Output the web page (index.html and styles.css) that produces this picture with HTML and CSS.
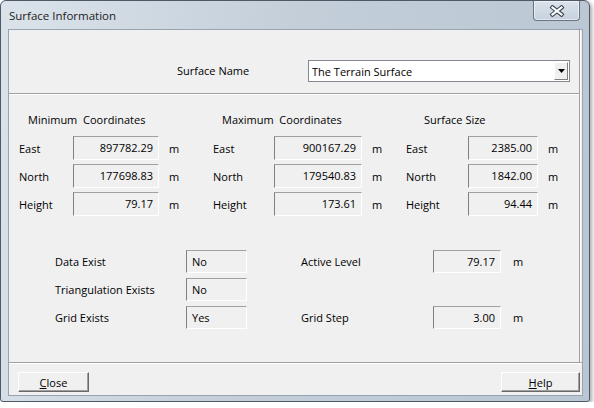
FILE: index.html
```html
<!DOCTYPE html>
<html>
<head>
<meta charset="utf-8">
<link rel="stylesheet" href="styles.css">
</head>
<body>
<div class="window">
  <div class="titlebar">
    <span class="title">Surface Information</span>
    <div class="xbtn">
      <svg width="16" height="12" viewBox="0 0 16 12">
        <path d="M3.5 2.5 L12.5 9.5 M12.5 2.5 L3.5 9.5" stroke="#3c4450" stroke-width="4.2" stroke-linecap="square"/>
        <path d="M3.5 2.5 L12.5 9.5 M12.5 2.5 L3.5 9.5" stroke="#ffffff" stroke-width="2.2" stroke-linecap="square"/>
      </svg>
    </div>
  </div>
  <div class="client">
    <div class="panel">
      <div class="top">
        <span class="name-label">Surface Name</span>
        <div class="combo">
          <span class="combo-text">The Terrain Surface</span>
          <span class="combo-btn"><svg width="7" height="4" viewBox="0 0 7 4"><path d="M0 0 H7 L3.5 4 Z" fill="#000"/></svg></span>
        </div>
      </div>
      <div class="middle">
        <div class="coords">
          <div class="col col-min">
            <div class="head">Minimum&nbsp; Coordinates</div>
            <span class="lbl">East</span><span class="box num">897782.29</span><span class="unit">m</span>
            <span class="lbl">North</span><span class="box num">177698.83</span><span class="unit">m</span>
            <span class="lbl">Height</span><span class="box num">79.17</span><span class="unit">m</span>
          </div>
          <div class="col col-max">
            <div class="head">Maximum&nbsp; Coordinates</div>
            <span class="lbl">East</span><span class="box num">900167.29</span><span class="unit">m</span>
            <span class="lbl">North</span><span class="box num">179540.83</span><span class="unit">m</span>
            <span class="lbl">Height</span><span class="box num">173.61</span><span class="unit">m</span>
          </div>
          <div class="col col-size">
            <div class="head">Surface Size</div>
            <span class="lbl">East</span><span class="box num">2385.00</span><span class="unit">m</span>
            <span class="lbl">North</span><span class="box num">1842.00</span><span class="unit">m</span>
            <span class="lbl">Height</span><span class="box num">94.44</span><span class="unit">m</span>
          </div>
        </div>
        <div class="lower">
          <div class="flags">
            <span class="lbl">Data Exist</span><span class="box txt">No</span>
            <span class="lbl">Triangulation Exists</span><span class="box txt">No</span>
            <span class="lbl">Grid Exists</span><span class="box txt">Yes</span>
          </div>
          <div class="levels">
            <span class="lbl r1">Active Level</span><span class="box num r1">79.17</span><span class="unit r1">m</span>
            <span class="lbl r3">Grid Step</span><span class="box num r3">3.00</span><span class="unit r3">m</span>
          </div>
        </div>
      </div>
    </div>
    <div class="footer">
      <button class="btn btn-close"><u>C</u>lose</button>
      <button class="btn btn-help"><u>H</u>elp</button>
    </div>
  </div>
</div>
</body>
</html>
```

FILE: styles.css
```css
html, body {
  margin: 0;
  padding: 0;
  background: #ffffff;
}
body {
  font-family: "Open Sans", "Noto Sans", sans-serif;
  font-size: 11px;
  color: #000;
}
.window {
  box-sizing: content-box;
  width: 575px;
  height: 395px;
  border: 1px solid #4f5966;
  border-radius: 6px 6px 3px 3px;
  background: linear-gradient(100deg, #dbe3ea 0px, #c3ced9 300px, #b9c6d3 100%);
  box-shadow: 2px 2px 4px rgba(0,0,0,0.35);
  display: flex;
  flex-direction: column;
  padding: 0 6px 5px 7px;
  margin: 0;
}
.titlebar {
  flex: 0 0 28px;
  height: 28px;
  display: flex;
  align-items: flex-start;
  justify-content: space-between;
  margin-left: -7px;
}
.title {
  font-size: 11.5px;
  color: #1b1b1b;
  padding: 7px 0 0 8px;
  line-height: 16px;
}
.xbtn {
  width: 45px;
  height: 19px;
  border: 1px solid #6a7584;
  border-top: none;
  border-radius: 0 0 4px 4px;
  background: linear-gradient(180deg, #dbe3eb, #c6d1dd);
  display: flex;
  align-items: center;
  justify-content: center;
  margin-right: 3px;
  box-shadow: inset 0 0 0 1px rgba(255,255,255,0.5);
}
.client {
  flex: 1 1 auto;
  background: #f0f0f0;
  border: 1px solid #98a4b1;
  display: flex;
  flex-direction: column;
}
.panel {
  flex: 0 0 auto;
  width: 570px;
  height: 332px;
  border-right: 1px solid #a0a0a0;
  box-shadow: 1px 0 0 #fff;
  display: flex;
  flex-direction: column;
}
.top {
  flex: 0 0 64px;
  height: 64px;
  border-bottom: 1px solid #a0a0a0;
  box-shadow: 0 1px 0 #ffffff;
  display: flex;
  align-items: flex-start;
  padding-top: 30px;
  box-sizing: border-box;
}
.name-label {
  margin-left: 168px;
  width: 131px;
  line-height: 22px;
}
.combo {
  width: 260px;
  height: 20px;
  border: 1px solid #828790;
  background: #fff;
  display: flex;
  align-items: center;
  justify-content: space-between;
}
.combo-text {
  padding-left: 3px;
  font-size: 11px;
}
.combo-btn {
  width: 14px;
  height: 18px;
  margin-right: 1px;
  background: #f0f0f0;
  border-top: 1px solid #fff;
  border-left: 1px solid #fff;
  border-right: 1px solid #808080;
  border-bottom: 1px solid #808080;
  box-sizing: border-box;
  display: flex;
  align-items: center;
  justify-content: center;
}
.middle {
  flex: 1;
  padding-top: 17px;
  margin-top: 1px;
}
.coords {
  display: flex;
  align-items: flex-start;
}
.col {
  display: grid;
  grid-auto-rows: 24px;
  row-gap: 4px;
  align-items: center;
}
.col .head {
  grid-column: 1 / -1;
  height: 16px;
  line-height: 16px;
  align-self: start;
  margin-bottom: 4px;
}
.col-min {
  margin-left: 10px;
  width: 194px;
  grid-template-columns: 54px 86px 1fr;
  grid-template-rows: 20px;
}
.col-min .head { padding-left: 9px; }
.col-max {
  width: 193px;
  grid-template-columns: 61px 88px 1fr;
  grid-template-rows: 20px;
}
.col-max .head { padding-left: 9px; }
.col-size {
  width: 170px;
  grid-template-columns: 62px 70px 1fr;
  grid-template-rows: 20px;
}
.col-size .head { padding-left: 18px; }
.box {
  height: 24px;
  box-sizing: border-box;
  border-top: 1px solid #a0a0a0;
  border-left: 1px solid #808080;
  border-right: 1px solid #ffffff;
  border-bottom: 1px solid #ffffff;
  line-height: 22px;
  white-space: nowrap;
}
.box.num {
  text-align: right;
  padding-right: 5px;
}
.box.txt {
  padding-left: 5px;
}
.unit {
  padding-left: 10px;
}
.lower {
  display: flex;
  margin-top: 34px;
}
.flags {
  margin-left: 46px;
  width: 246px;
  display: grid;
  grid-template-columns: 131px 61px;
  grid-auto-rows: 23px;
  row-gap: 5px;
  align-items: center;
}
.flags .box, .levels .box { height: 23px; line-height: 21px; }
.levels {
  display: grid;
  grid-template-columns: 132px 68px auto;
  grid-template-rows: 23px 23px 23px;
  row-gap: 5px;
  align-items: center;
}
.levels .r1 { grid-row: 1; }
.levels .r3 { grid-row: 3; }
.levels .unit { padding-left: 12px; }
.footer {
  flex: 1 1 auto;
  border-top: 1px solid #a0a0a0;
  box-shadow: inset 0 1px 0 #fff;
  display: flex;
  justify-content: space-between;
  align-items: flex-start;
  padding: 9px 2px 0 9px;
}
.btn {
  height: 20px;
  font-family: "Open Sans", "Noto Sans", sans-serif;
  font-size: 11px;
  background: #f0f0f0;
  border-top: 1px solid #ffffff;
  border-left: 1px solid #ffffff;
  border-right: 1px solid #696969;
  border-bottom: 1px solid #696969;
  box-shadow: inset -1px -1px 0 #a0a0a0;
  padding: 0;
  line-height: 17px;
  color: #000;
}
.btn-close { width: 71px; }
.btn-help { width: 79px; }
```
